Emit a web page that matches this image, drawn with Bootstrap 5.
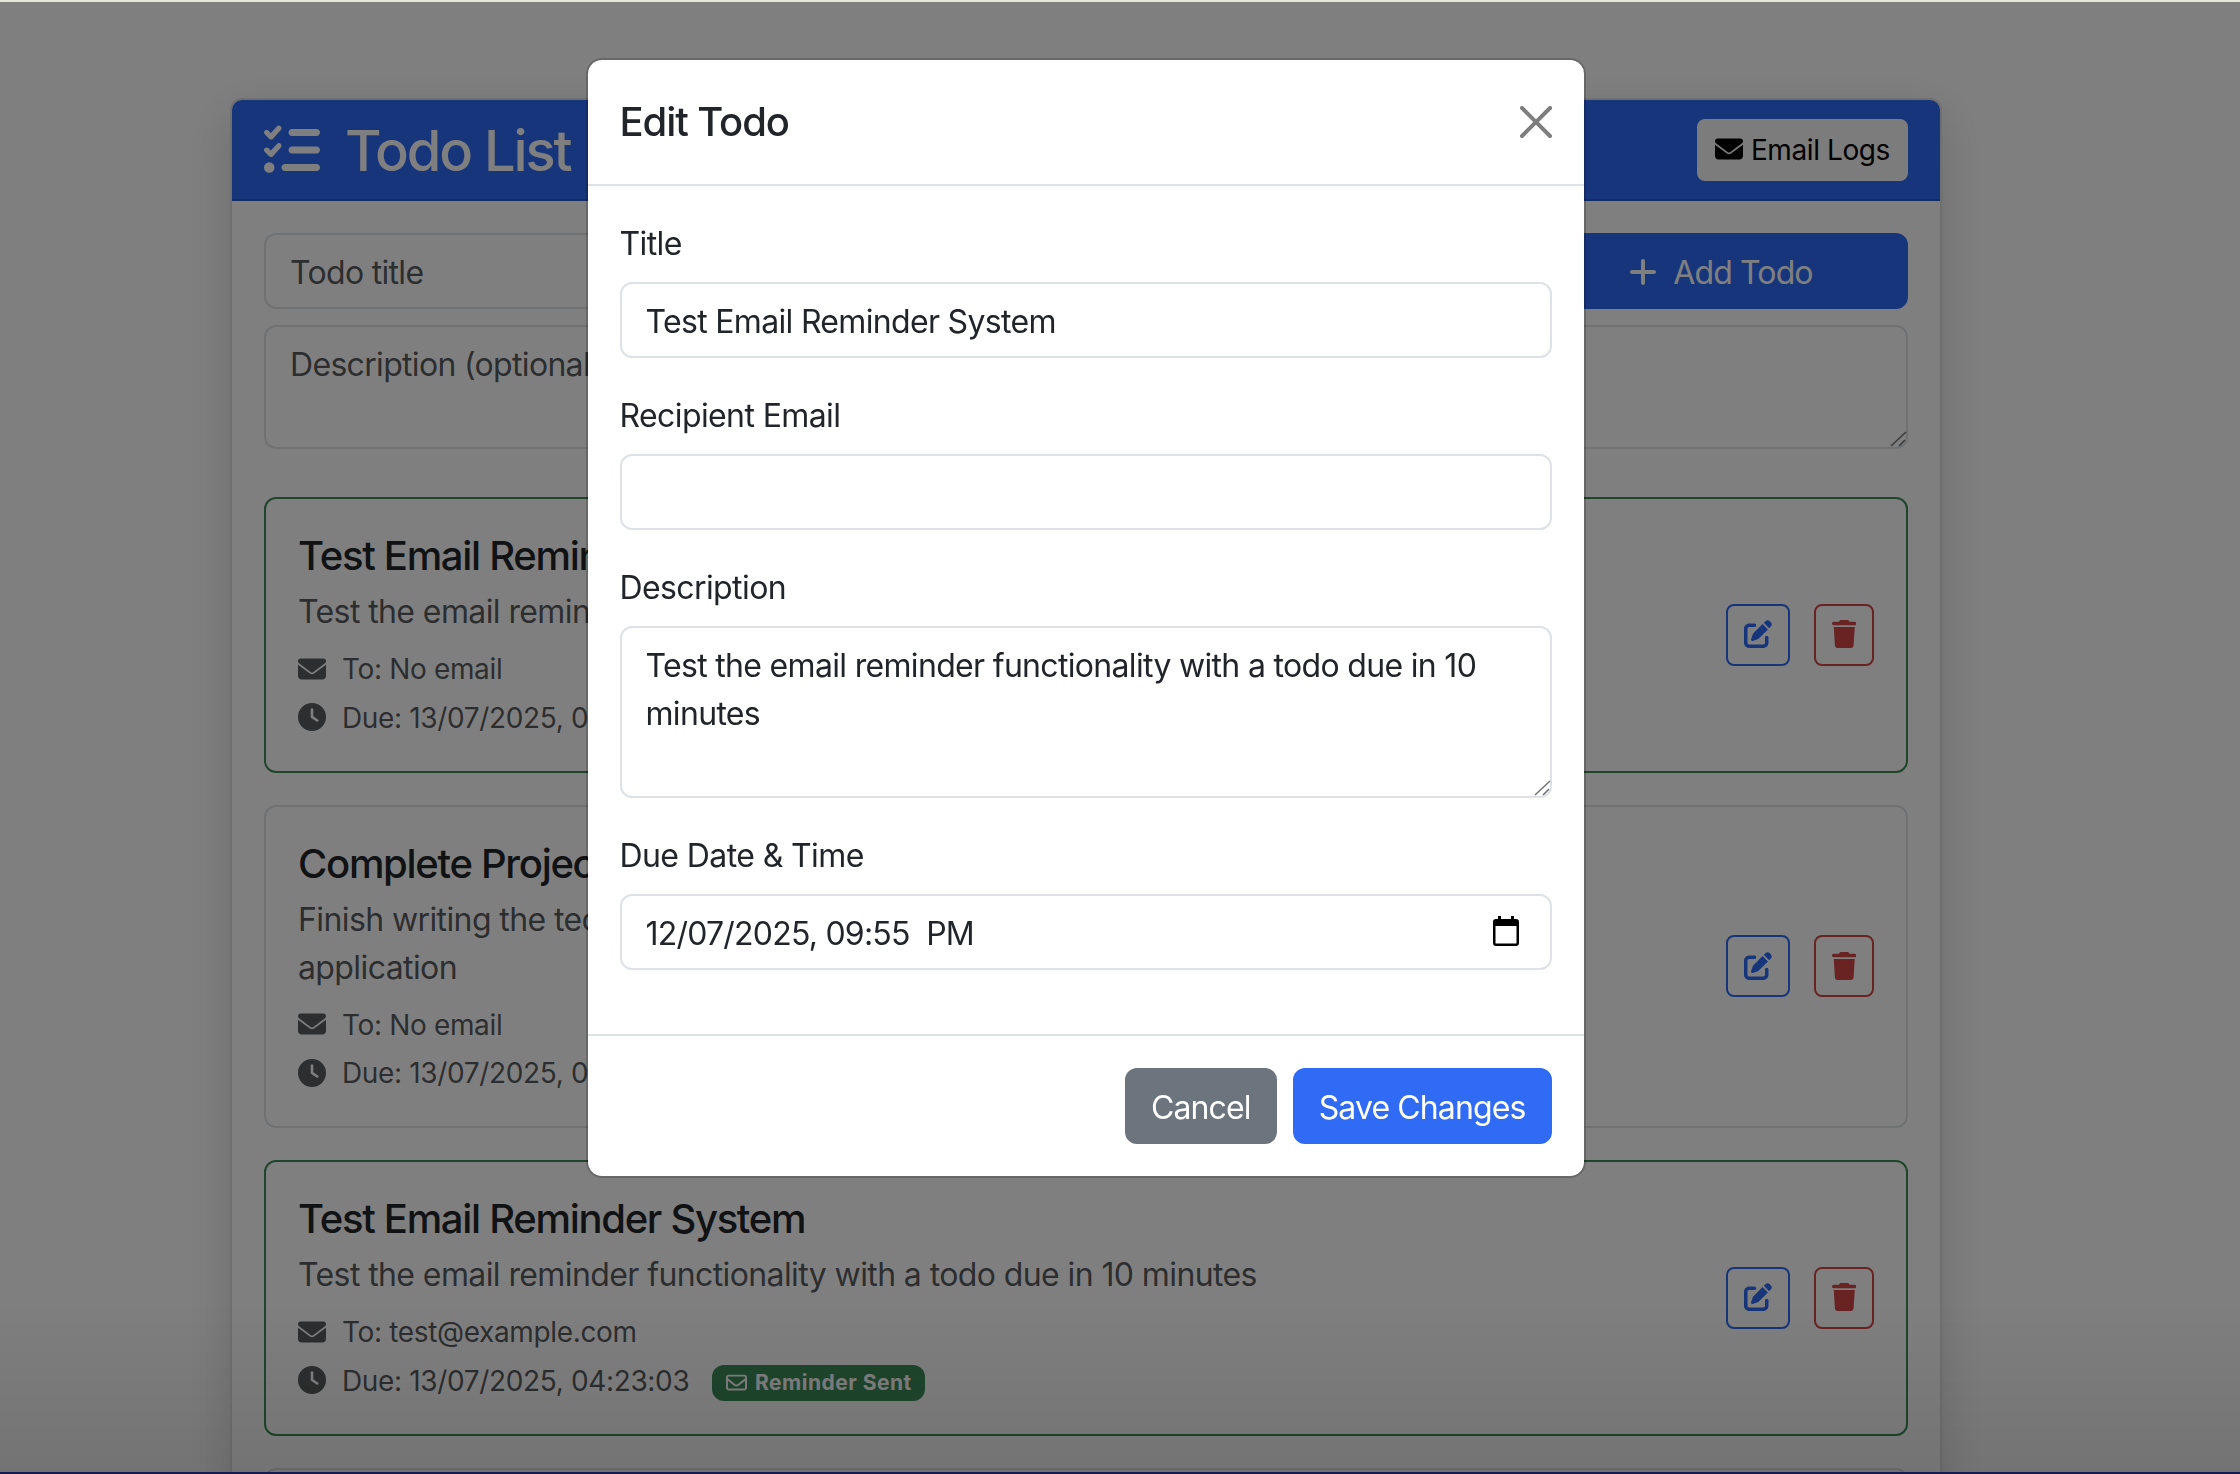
<!DOCTYPE html>
<html lang="en">
<head>
<meta charset="utf-8">
<title>Todo List</title>
<link href="https://cdn.jsdelivr.net/npm/bootstrap@5.3.0/dist/css/bootstrap.min.css" rel="stylesheet">
<style>
html{font-size:32px;overflow:hidden;height:100%}
:root{--bs-border-width:2px;--bs-body-font-family:Inter,"Liberation Sans",sans-serif;--bs-body-font-size:32px;--bs-primary-rgb:47,107,245}
body{font-family:Inter,"Liberation Sans",sans-serif;background:#fff;overflow:hidden;height:100%;padding-right:68px;letter-spacing:-.6px}
.form-control{border-width:2px;letter-spacing:-.68px;resize:none;padding-top:14px;padding-bottom:10px}
.date-field{letter-spacing:-.78px}
.form-label{padding-top:2px;margin-bottom:14px}
.top-strip{position:fixed;top:0;left:0;right:0;height:2px;background:#e6e6d8;z-index:1060}
.bottom-strip{position:fixed;bottom:0;left:0;right:0;height:2px;background:#141c4e;z-index:1060}
.bottom-shade{position:fixed;bottom:0;left:0;right:0;height:170px;background:linear-gradient(rgba(0,0,0,0),rgba(0,0,0,.09));z-index:1052}
.app-wrap{width:1712px;margin:98px auto 0}
.app-card{border-color:rgba(0,0,0,.125);box-shadow:0 16px 48px rgba(0,0,0,.15)}
.app-head{background:#2f6bf5;color:#fff;display:flex;justify-content:space-between;align-items:center}
.app-head h3{letter-spacing:-2.1px;padding-top:2px;margin-bottom:-2px}
.head-ico{margin-right:25px;letter-spacing:0}
.ico{height:1em;vertical-align:-.125em;fill:currentColor}
.btn-blue{--bs-btn-bg:#2f6bf5;--bs-btn-border-color:#2f6bf5;--bs-btn-color:#fff}
.add-btn{width:374px;flex:none}
.outline-blue{--bs-btn-color:#2f6bf5;--bs-btn-border-color:#2f6bf5}
.outline-red{--bs-btn-color:#d24646;--bs-btn-border-color:#d24646}
.btn{--bs-btn-border-width:2px}
.btn-sm{letter-spacing:-.4px}
.btn:not(.btn-sm){letter-spacing:-.88px;padding-top:14px;padding-bottom:10px}
.todo-item{background:#fff;border-radius:12px;margin-bottom:32px}
.todo-item h5{letter-spacing:-1.3px;padding-top:1px;margin-bottom:8px;font-weight:550}
.todo-ok{border-color:#3f8d5a!important}
.todo-gap{gap:24px}
.line-desc{margin-bottom:12px}
.line-meta{margin-bottom:6.5px}
.meta-text{letter-spacing:-.35px}
.badge-sent{background:#3f8d5a;margin-left:23px;letter-spacing:.5px}
.modal-wrap{width:2171px;display:block;padding-top:2px;--bs-modal-width:1000px}
.modal-title{letter-spacing:-1.1px;font-weight:550}
.date-ico{position:absolute;right:33px;top:22px;width:26px;height:30px}
.rs-grip{position:absolute;right:0;bottom:0;width:20px;height:20px;stroke:#777;stroke-width:1.6;fill:none}
</style>
</head>
<body>
<svg width="0" height="0" class="d-none">
<defs>
<symbol id="i-env" viewBox="0 0 512 512"><path d="M48 64C21.5 64 0 85.5 0 112c0 15.1 7.1 29.3 19.2 38.4L236.8 313.6c11.4 8.5 27 8.5 38.4 0L492.8 150.4c12.1-9.1 19.2-23.3 19.2-38.4c0-26.5-21.5-48-48-48H48zM0 176V384c0 35.3 28.7 64 64 64H448c35.3 0 64-28.7 64-64V176L294.4 339.2c-22.8 17.1-54 17.1-76.8 0L0 176z"/></symbol>
<symbol id="i-env-o" viewBox="0 0 512 512"><path d="M64 112c-8.8 0-16 7.2-16 16v22.1L220.5 291.7c20.7 17 50.4 17 71.1 0L464 150.1V128c0-8.8-7.2-16-16-16H64zM48 212.2V384c0 8.8 7.2 16 16 16H448c8.8 0 16-7.2 16-16V212.2L322 328.8c-38.4 31.5-93.7 31.5-132 0L48 212.2zM0 128C0 92.7 28.7 64 64 64H448c35.3 0 64 28.7 64 64V384c0 35.3-28.7 64-64 64H64c-35.3 0-64-28.7-64-64V128z"/></symbol>
<symbol id="i-clock" viewBox="0 0 512 512"><path d="M256 0a256 256 0 1 1 0 512A256 256 0 1 1 256 0zM232 120V256c0 8 4 15.5 10.7 20l96 64c11 7.4 25.9 4.4 33.3-6.7s4.4-25.9-6.7-33.3L280 243.2V120c0-13.3-10.7-24-24-24s-24 10.7-24 24z"/></symbol>
<symbol id="i-trash" viewBox="0 0 448 512"><path d="M135.2 17.7L128 32H32C14.3 32 0 46.3 0 64S14.3 96 32 96H416c17.7 0 32-14.3 32-32s-14.3-32-32-32H320l-7.2-14.3C307.4 6.8 296.3 0 284.2 0H163.8c-12.1 0-23.2 6.8-28.6 17.7zM416 128H32L53.2 467c1.6 25.3 22.6 45 47.9 45H346.9c25.3 0 46.3-19.7 47.9-45L416 128z"/></symbol>
<symbol id="i-pen" viewBox="0 0 512 512"><path d="M471.6 21.7c-21.9-21.9-57.3-21.9-79.2 0L362.3 51.7l97.9 97.9 30.1-30.1c21.9-21.9 21.9-57.3 0-79.2L471.6 21.7zm-299.2 220c-6.1 6.1-10.8 13.6-13.5 21.9l-29.6 88.8c-2.9 8.6-.6 18.1 5.8 24.6s15.9 8.7 24.6 5.8l88.8-29.6c8.2-2.7 15.7-7.4 21.9-13.5L437.7 172.3 339.7 74.3 172.4 241.7zM96 64C43 64 0 107 0 160V416c0 53 43 96 96 96H352c53 0 96-43 96-96V320c0-17.7-14.3-32-32-32s-32 14.3-32 32v96c0 17.7-14.3 32-32 32H96c-17.7 0-32-14.3-32-32V160c0-17.7 14.3-32 32-32h96c17.7 0 32-14.3 32-32s-14.3-32-32-32H96z"/></symbol>
<symbol id="i-list" viewBox="0 0 512 512"><path d="M152.1 38.2c9.9 8.9 10.7 24 1.8 33.9l-72 80c-4.4 4.9-10.6 7.8-17.2 7.9s-12.9-2.4-17.6-7L7 113C-2.3 103.6-2.3 88.4 7 79s24.6-9.4 33.9 0l22.1 22.1 55.1-61.2c8.9-9.9 24-10.7 33.9-1.8zm0 160c9.9 8.9 10.7 24 1.8 33.9l-72 80c-4.4 4.9-10.6 7.8-17.2 7.9s-12.9-2.4-17.6-7L7 273c-9.4-9.4-9.4-24.6 0-33.9s24.6-9.4 33.9 0l22.1 22.1 55.1-61.2c8.9-9.9 24-10.7 33.9-1.8zM224 96c0-17.7 14.3-32 32-32H480c17.7 0 32 14.3 32 32s-14.3 32-32 32H256c-17.7 0-32-14.3-32-32zm0 160c0-17.7 14.3-32 32-32H480c17.7 0 32 14.3 32 32s-14.3 32-32 32H256c-17.7 0-32-14.3-32-32zM160 416c0-17.7 14.3-32 32-32H480c17.7 0 32 14.3 32 32s-14.3 32-32 32H192c-17.7 0-32-14.3-32-32zM48 368a48 48 0 1 1 0 96 48 48 0 1 1 0-96z"/></symbol>
<symbol id="i-plus" viewBox="0 0 448 512"><path d="M256 80c0-17.7-14.3-32-32-32s-32 14.3-32 32V224H48c-17.7 0-32 14.3-32 32s14.3 32 32 32H192V432c0 17.7 14.3 32 32 32s32-14.3 32-32V288H400c17.7 0 32-14.3 32-32s-14.3-32-32-32H256V80z"/></symbol>
</defs>
</svg>

<div class="top-strip"></div>
<div class="app-wrap">
  <div class="card app-card">
    <div class="card-header app-head">
      <h3><svg class="ico head-ico" viewBox="0 0 512 512"><use href="#i-list"/></svg>Todo List</h3>
      <button class="btn btn-light btn-sm" type="button"><svg class="ico me-1" viewBox="0 0 512 512"><use href="#i-env"/></svg>Email Logs</button>
    </div>
    <div class="card-body">
      <form class="mb-4">
        <div class="d-flex gap-2 mb-2">
          <input class="form-control" type="text" placeholder="Todo title">
          <button class="btn btn-blue add-btn" type="button"><svg class="ico me-2" viewBox="0 0 448 512"><use href="#i-plus"/></svg>Add Todo</button>
        </div>
        <div class="position-relative">
          <textarea class="form-control d-block" rows="2" placeholder="Description (optional)"></textarea>
          <svg class="rs-grip" viewBox="0 0 20 20"><path d="M3 17 18 3M11 17l6-6"/></svg>
        </div>
      </form>

      <div class="todo-item border border-2 todo-ok p-3 d-flex justify-content-between align-items-center">
        <div>
          <h5>Test Email Reminder System</h5>
          <p class="text-muted line-desc">Test the email reminder functionality with a todo due in 10 minutes</p>
          <div class="small text-muted line-meta meta-text"><svg class="ico me-2" viewBox="0 0 512 512"><use href="#i-env"/></svg>To: No email</div>
          <div class="small text-muted meta-text"><svg class="ico me-2" viewBox="0 0 512 512"><use href="#i-clock"/></svg>Due: 13/07/2025, 04:13:03</div>
        </div>
        <div class="d-flex todo-gap">
          <button class="btn btn-sm btn-outline-primary outline-blue" type="button"><svg class="ico" viewBox="0 0 512 512"><use href="#i-pen"/></svg></button>
          <button class="btn btn-sm btn-outline-danger outline-red" type="button"><svg class="ico" viewBox="0 0 448 512"><use href="#i-trash"/></svg></button>
        </div>
      </div>

      <div class="todo-item border border-2 p-3 d-flex justify-content-between align-items-center">
        <div>
          <h5>Complete Project Documentation</h5>
          <p class="text-muted line-desc">Finish writing the technical documentation for the todo list<br>application</p>
          <div class="small text-muted line-meta meta-text"><svg class="ico me-2" viewBox="0 0 512 512"><use href="#i-env"/></svg>To: No email</div>
          <div class="small text-muted meta-text"><svg class="ico me-2" viewBox="0 0 512 512"><use href="#i-clock"/></svg>Due: 13/07/2025, 09:00:00</div>
        </div>
        <div class="d-flex todo-gap">
          <button class="btn btn-sm btn-outline-primary outline-blue" type="button"><svg class="ico" viewBox="0 0 512 512"><use href="#i-pen"/></svg></button>
          <button class="btn btn-sm btn-outline-danger outline-red" type="button"><svg class="ico" viewBox="0 0 448 512"><use href="#i-trash"/></svg></button>
        </div>
      </div>

      <div class="todo-item border border-2 todo-ok p-3 d-flex justify-content-between align-items-center">
        <div>
          <h5>Test Email Reminder System</h5>
          <p class="text-muted line-desc">Test the email reminder functionality with a todo due in 10 minutes</p>
          <div class="small text-muted line-meta meta-text"><svg class="ico me-2" viewBox="0 0 512 512"><use href="#i-env"/></svg>To: test@example.com</div>
          <div class="small text-muted meta-text"><svg class="ico me-2" viewBox="0 0 512 512"><use href="#i-clock"/></svg>Due: 13/07/2025, 04:23:03<span class="badge badge-sent"><svg class="ico me-1" viewBox="0 0 512 512"><use href="#i-env-o"/></svg>Reminder Sent</span></div>
        </div>
        <div class="d-flex todo-gap">
          <button class="btn btn-sm btn-outline-primary outline-blue" type="button"><svg class="ico" viewBox="0 0 512 512"><use href="#i-pen"/></svg></button>
          <button class="btn btn-sm btn-outline-danger outline-red" type="button"><svg class="ico" viewBox="0 0 448 512"><use href="#i-trash"/></svg></button>
        </div>
      </div>

      <div class="todo-item border border-2 p-3"></div>
    </div>
  </div>
</div>

<div class="modal-backdrop fade show"></div>
<div class="bottom-shade"></div>
<div class="modal fade show modal-wrap" tabindex="-1" role="dialog">
  <div class="modal-dialog">
    <div class="modal-content">
      <div class="modal-header">
        <h5 class="modal-title">Edit Todo</h5>
        <button type="button" class="btn-close" aria-label="Close"></button>
      </div>
      <div class="modal-body">
        <div class="mb-3">
          <label class="form-label">Title</label>
          <input class="form-control" type="text" value="Test Email Reminder System">
        </div>
        <div class="mb-3">
          <label class="form-label">Recipient Email</label>
          <input class="form-control" type="email">
        </div>
        <div class="mb-3">
          <label class="form-label">Description</label>
          <div class="position-relative">
            <textarea class="form-control d-block" rows="3">Test the email reminder functionality with a todo due in 10 minutes</textarea>
            <svg class="rs-grip" viewBox="0 0 20 20"><path d="M3 17 18 3M11 17l6-6"/></svg>
          </div>
        </div>
        <div class="mb-3">
          <label class="form-label">Due Date &amp; Time</label>
          <div class="position-relative">
            <input class="form-control date-field" type="text" value="12/07/2025, 09:55  PM">
            <svg class="date-ico" viewBox="0 0 26 30"><path d="M5 0h3v3h10V0h3v3h2a3 3 0 0 1 3 3v21a3 3 0 0 1-3 3H3a3 3 0 0 1-3-3V6a3 3 0 0 1 3-3h2zM2.500 10v17a.5.5 0 0 0 .5.5h20a.5.5 0 0 0 .5-.5V10z" fill="#000" fill-rule="evenodd"/></svg>
          </div>
        </div>
      </div>
      <div class="modal-footer">
        <button type="button" class="btn btn-secondary">Cancel</button>
        <button type="button" class="btn btn-blue">Save Changes</button>
      </div>
    </div>
  </div>
</div>
<div class="bottom-strip"></div>
<script src="https://cdn.jsdelivr.net/npm/bootstrap@5.3.0/dist/js/bootstrap.bundle.min.js"></script>
</body>
</html>
